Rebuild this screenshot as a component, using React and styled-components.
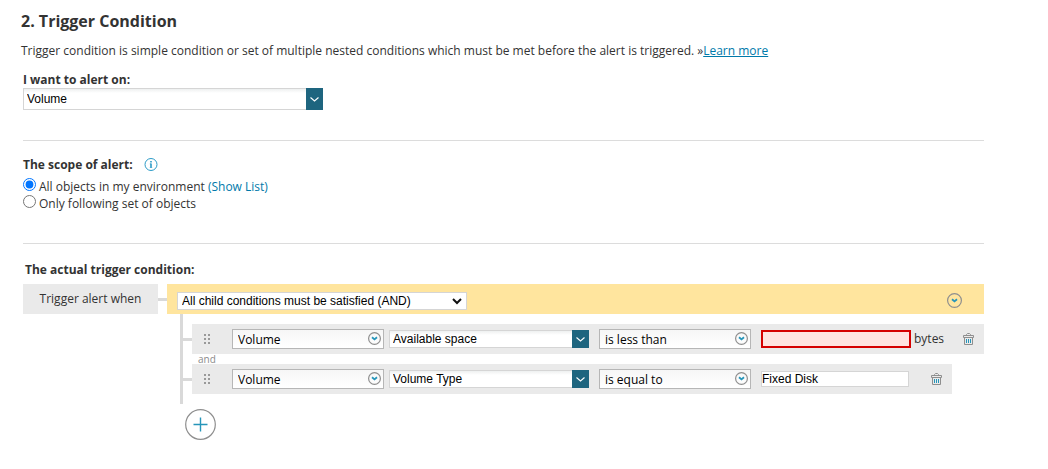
import { useState } from 'react';
import styled, { createGlobalStyle } from 'styled-components';

const GlobalStyle = createGlobalStyle`
	* {
		box-sizing: border-box;
	}

	body {
		margin: 0;
		background: #ffffff;
		color: #333333;
		font-family: "Open Sans", sans-serif;
		font-size: 12px;
		line-height: 16px;
	}

	button {
		padding: 0;
		border: none;
		background: none;
		cursor: pointer;
	}

	svg {
		display: block;
	}
`;

const Page = styled.main`
	padding: 11px 64px 24px 21px;
`;

const Title = styled.h2`
	margin: 0;
	font-size: 16px;
	font-weight: 700;
	line-height: 20px;
`;

const Intro = styled.p`
	margin: 12px 0 0;
`;

const Link = styled.a`
	color: #0079aa;
	text-decoration: ${(props) => (props.$underline ? 'underline' : 'none')};
`;

const Section = styled.section`
	margin: ${(props) => (props.$first ? '13px' : '30px')} 0 0 2px;
	padding-top: ${(props) => (props.$first ? '0' : '16px')};
	border-top: ${(props) => (props.$first ? 'none' : '1px solid #dcdcdc')};
`;

const Label = styled.label`
	display: block;
	font-weight: 700;
`;

const Heading = styled.h3`
	display: flex;
	align-items: center;
	gap: 11px;
	margin: 0;
	padding: ${(props) => (props.$indent ? '2px 0 0 2px' : '0')};
	font-size: 12px;
	font-weight: 700;
`;

const RadioGroup = styled.div`
	display: flex;
	flex-direction: column;
	margin-top: 5px;
	padding-bottom: 1px;
`;

const RadioRow = styled.div`
	display: flex;
	align-items: flex-start;
	gap: 3px;
	line-height: 17px;

	input {
		width: 13px;
		height: 13px;
		margin: 0;
	}
`;

const SelectBox = styled.div`
	position: relative;
	width: ${(props) => props.$width};
	max-width: 100%;
	height: ${(props) => props.$height};

	select {
		display: block;
		width: 100%;
		height: 100%;
		appearance: none;
		border-radius: 0;
		color: #000000;
	}
`;

const ComboSelect = styled.select`
	padding: 0 20px 0 3px;
	border: 1px solid #d5d5d5;
	background: linear-gradient(#eef0f0, #ffffff 4px);
	font-family: "Liberation Sans", Arial, sans-serif;
	font-size: 12px;
`;

const ComboArrow = styled.span`
	position: absolute;
	top: 0;
	right: 0;
	bottom: 0;
	display: flex;
	align-items: center;
	justify-content: center;
	width: 17px;
	background: #1e657f;
	pointer-events: none;
`;

const RoundSelect = styled.select`
	padding: 0 20px 0 5px;
	border: 1px solid #b6b6b6;
	background: linear-gradient(#f6f6f6, #ffffff);
	font-family: "Open Sans", sans-serif;
	font-size: 12px;
`;

const RoundArrow = styled.span`
	position: absolute;
	top: 3px;
	right: 3px;
	pointer-events: none;
`;

const PlainSelect = styled.select`
	padding: 0 20px 0 4px;
	border: 1px solid #d5d5d5;
	background: #ffffff;
	font-family: "Liberation Sans", Arial, sans-serif;
	font-size: 12px;
`;

const PlainArrow = styled.span`
	position: absolute;
	top: 6px;
	right: 5px;
	pointer-events: none;
`;

const Tree = styled.div`
	display: flex;
	align-items: flex-start;
	margin-top: 6px;
`;

const TreeLabel = styled.div`
	width: 135px;
	background: #eaeaea;
	line-height: 30px;
	text-align: center;
`;

const Connector = styled.span`
	flex: none;
	width: 9px;
	height: 3px;
	background: #d9d9d9;
`;

const RootConnector = styled(Connector)`
	margin-top: 14px;
`;

const Branch = styled.div`
	flex: 1;
	min-width: 0;
`;

const BranchHeader = styled.div`
	display: flex;
	align-items: center;
	justify-content: space-between;
	height: 30px;
	padding: 4px 22px 0 10px;
	background: #ffe59e;

	button {
		margin-top: -2px;
	}
`;

const Conditions = styled.div`
	margin-left: 13px;
	padding: 10px 0;
	border-left: 3px solid #d9d9d9;
`;

const ConditionLine = styled.div`
	display: flex;
	align-items: center;
`;

const ConditionRow = styled.div`
	display: flex;
	align-items: center;
	height: 30px;
	padding: 0 10px 0 12px;
	background: #eaeaea;
`;

const Handle = styled.span`
	width: 28px;
`;

const Fields = styled.div`
	display: flex;
	align-items: center;
	gap: 10px;
`;

const FieldPair = styled.div`
	display: flex;
	align-items: center;
	gap: 5px;
`;

const ValueInput = styled.input`
	width: ${(props) => (props.$invalid ? '150px' : '148px')};
	height: ${(props) => (props.$invalid ? '18px' : '16px')};
	padding: 0;
	border: ${(props) => (props.$invalid ? '2px solid #d50000' : '1px solid #d5d5d5')};
	background: ${(props) => (props.$invalid ? '#ffe3e0' : '#ffffff')};
	color: #000000;
	font-family: "Liberation Sans", Arial, sans-serif;
	font-size: 12px;
`;

const Unit = styled.span`
	margin-left: 3px;
`;

const DeleteButton = styled.button`
	margin-left: ${(props) => (props.$afterUnit ? '19px' : '22px')};
`;

const Operator = styled.div`
	height: 10px;
	padding-left: 15px;
	color: #8c8c8c;
	font-size: 10px;
	line-height: 10px;
`;

const AddButton = styled.button`
	display: block;
	margin: 5px 0 0 18px;
`;

function InfoIcon() {
	return (
		<svg width="14" height="14" viewBox="0 0 14 14" fill="none" stroke="#2c9bc7">
			<circle cx="7" cy="6.5" r="6" />
			<path d="M7 5.5v4M7 3v1.4" strokeWidth="1.6" />
			<path d="M5.8 5.9h1.2M5.8 9.5h2.4" strokeWidth="0.7" />
		</svg>
	);
}

function CircleChevron({ size }) {
	return (
		<svg width={size} height={size} viewBox={`0 0 ${size} ${size}`} fill="none">
			<circle cx={size / 2} cy={size / 2} r={size / 2 - 0.6} stroke="#8e8e8e" strokeWidth="1.2" />
			<path
				d={`M${size / 2 - 2.5} ${size / 2 - 1.3}l2.5 2.2 2.5-2.2`}
				stroke="#2695b9"
				strokeWidth="1.8"
			/>
		</svg>
	);
}

function TrashIcon() {
	return (
		<svg width="11" height="12" viewBox="0 0 11 12" fill="none">
			<path d="M3.5 2.5v-1l1-1h2l1 1v1M0.5 4.5v-2h10v2zM1.5 4.5v7h8v-7" stroke="#8e8e8e" />
			<path d="M3.5 6v4M5.5 6v4M7.5 6v4" stroke="#2695b9" />
		</svg>
	);
}

function DragIcon() {
	return (
		<svg width="7" height="10" viewBox="0 0 7 10" fill="#999999">
			<path d="M0 0h2v2H0zM4 0h2v2H4zM0 4h2v2H0zM4 4h2v2H4zM0 8h2v2H0zM4 8h2v2H4z" />
		</svg>
	);
}

function Combo({ id, label, options, width = '200px', height = '18px' }) {
	return (
		<SelectBox $width={width} $height={height}>
			<ComboSelect id={id} aria-label={label}>
				{options.map((option) => (
					<option key={option}>{option}</option>
				))}
			</ComboSelect>
			<ComboArrow>
				<svg width="9" height="5" viewBox="0 0 9 5" fill="none" stroke="#ffffff" strokeWidth="1.1">
					<path d="M0.5 0.5l4 3.5 4-3.5" />
				</svg>
			</ComboArrow>
		</SelectBox>
	);
}

function RoundDropdown({ label, options }) {
	return (
		<SelectBox $width="152px" $height="20px">
			<RoundSelect aria-label={label}>
				{options.map((option) => (
					<option key={option}>{option}</option>
				))}
			</RoundSelect>
			<RoundArrow>
				<CircleChevron size={13} />
			</RoundArrow>
		</SelectBox>
	);
}

function Condition({ object, field, operator, initialValue, unit }) {
	const [value, setValue] = useState(initialValue);

	return (
		<ConditionLine>
			<Connector />
			<ConditionRow>
				<Handle>
					<DragIcon />
				</Handle>
				<Fields>
					<FieldPair>
						<RoundDropdown label="Object" options={[object]} />
						<Combo label="Field" options={[field]} />
					</FieldPair>
					<RoundDropdown label="Comparison" options={[operator]} />
					<ValueInput
						type="text"
						aria-label="Value"
						$invalid={!value}
						value={value}
						onChange={(e) => setValue(e.target.value)}
					/>
				</Fields>
				{unit && <Unit>{unit}</Unit>}
				<DeleteButton type="button" aria-label="Delete condition" $afterUnit={!!unit}>
					<TrashIcon />
				</DeleteButton>
			</ConditionRow>
		</ConditionLine>
	);
}

function App() {
	const [scope, setScope] = useState('all');

	return (
		<>
			<GlobalStyle />
			<Page>
				<Title>2. Trigger Condition</Title>
				<Intro>
					Trigger condition is simple condition or set of multiple nested conditions which must be met
					before the alert is triggered. »<Link href="#learn" $underline>Learn more</Link>
				</Intro>

				<Section $first>
					<Label htmlFor="alertOn">I want to alert on:</Label>
					<Combo id="alertOn" options={['Volume']} width="300px" height="22px" />
				</Section>

				<Section>
					<Heading>
						The scope of alert:
						<InfoIcon />
					</Heading>
					<RadioGroup>
						<RadioRow>
							<input
								type="radio"
								name="scope"
								id="scopeAll"
								checked={scope === 'all'}
								onChange={() => setScope('all')}
							/>
							<span>
								<label htmlFor="scopeAll">All objects in my environment</label>{' '}
								<Link href="#list">(Show List)</Link>
							</span>
						</RadioRow>
						<RadioRow>
							<input
								type="radio"
								name="scope"
								id="scopeSet"
								checked={scope === 'set'}
								onChange={() => setScope('set')}
							/>
							<label htmlFor="scopeSet">Only following set of objects</label>
						</RadioRow>
					</RadioGroup>
				</Section>

				<Section>
					<Heading $indent>The actual trigger condition:</Heading>
					<Tree>
						<TreeLabel>Trigger alert when</TreeLabel>
						<RootConnector />
						<Branch>
							<BranchHeader>
								<SelectBox $width="290px" $height="18px">
									<PlainSelect aria-label="Child conditions">
										<option>All child conditions must be satisfied (AND)</option>
									</PlainSelect>
									<PlainArrow>
										<svg width="10" height="7" viewBox="0 0 10 7" fill="none" stroke="#111111" strokeWidth="2">
											<path d="M1 1l4 4 4-4" />
										</svg>
									</PlainArrow>
								</SelectBox>
								<button type="button" aria-label="Group options">
									<CircleChevron size={15} />
								</button>
							</BranchHeader>
							<Conditions>
								<Condition
									object="Volume"
									field="Available space"
									operator="is less than"
									initialValue=""
									unit="bytes"
								/>
								<Operator>and</Operator>
								<Condition
									object="Volume"
									field="Volume Type"
									operator="is equal to"
									initialValue="Fixed Disk"
								/>
							</Conditions>
							<AddButton type="button" aria-label="Add condition">
								<svg width="31" height="31" viewBox="0 0 31 31" fill="none">
									<circle cx="15.5" cy="15.5" r="14.8" stroke="#8e8e8e" strokeWidth="1.2" />
									<path d="M15.5 8.5v14M8.5 15.5h14" stroke="#2695b9" strokeWidth="1.4" />
								</svg>
							</AddButton>
						</Branch>
					</Tree>
				</Section>
			</Page>
		</>
	);
}

export default App;
